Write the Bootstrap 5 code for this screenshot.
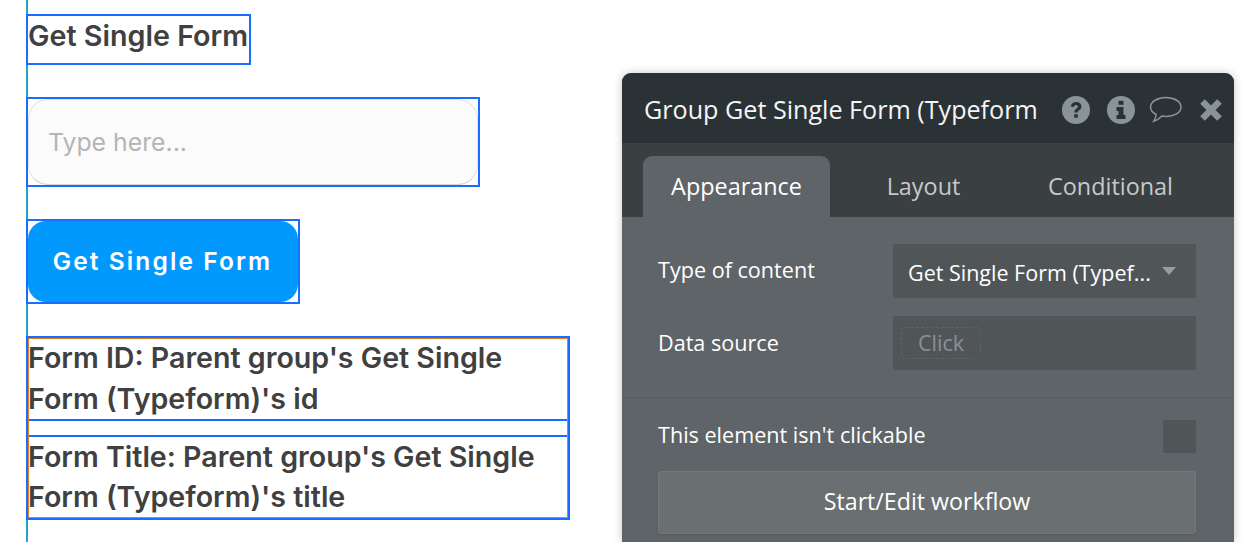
<!DOCTYPE html>
<html lang="en">
<head>
<meta charset="utf-8">
<title>Get Single Form</title>
<link href="https://cdn.jsdelivr.net/npm/bootstrap@5.3.0/dist/css/bootstrap.min.css" rel="stylesheet">
<style>
html,body{height:542px;overflow:hidden;background:#fff}
body{font-family:"Inter",sans-serif;color:#404040;position:relative}
.guide-line{position:absolute;left:26px;top:0;bottom:0;width:2px;background:#1fa5c9}
.canvas-col{padding-left:26px;padding-top:14px}
.sel-box{border:2px solid #1a6dff;position:relative;box-sizing:border-box}
.title-box{width:225px;height:51px;font-size:28.7px;font-weight:600;line-height:39px;white-space:nowrap}
.input-box{width:454px;height:90px;margin-top:32px}
.fake-input{height:100%;border:1px solid #e2e2e2;border-bottom-color:#d6d6d6;border-radius:20px;background:#fbfbfb;color:#b5b5b5;font-size:24.8px;padding-left:19px;line-height:85px}
.btn-box{width:274px;height:85px;margin-top:32px}
.blue-btn{display:block;width:100%;height:100%;background:#0299ff;border:0;border-radius:18px;color:#fff;font-size:24.5px;font-weight:600;letter-spacing:2.1px;padding:0 1px 0 0;font-family:"Inter",sans-serif}
.text-stack{width:544px;margin-top:32px;font-size:28.6px;font-weight:600}
.text-stack::after{content:"";position:absolute;inset:0;border:1px solid #e67e22;pointer-events:none}
.text-row{height:83px;line-height:40.5px;white-space:nowrap}
.text-row.first-row{border-bottom:2px solid #1a6dff}
.text-row.second-row{border-top:2px solid #1a6dff;margin-top:14px;line-height:40px}
.prop-panel{position:absolute;left:622px;top:73px;width:612px;height:469px;background:#5f6468;border-radius:9px 9px 0 0;box-shadow:0 0 10px rgba(0,0,0,.22);font-family:"Open Sans",sans-serif;color:#fff;overflow:hidden}
.panel-head{height:70px;background:#2b3235;padding:3px 1px 0 22px}
.panel-title{font-size:25.15px;white-space:nowrap;color:#f4f5f5}
.icon-slot{width:45px}
.tab-row{height:74px;background:#3a3f42;padding:13px 0 0 21px}
.tab-item{width:187px;height:61px;font-size:23.4px;line-height:60px;text-align:center;color:#c6c9ca;border-radius:9px 9px 0 0}
.tab-item.active-tab{background:#5f6468;color:#fff}
.prop-area{padding:27px 38px 0 36px}
.prop-label{font-size:21.6px;color:#fff;line-height:28px}
.label-nudge{margin-top:-2px}
.fake-select{width:303px;height:54px;background:#505558;border-radius:2px;font-size:21.5px;padding:4px 20px 0 15px;color:#fff}
.caret-shape{width:0;height:0;border-left:7.5px solid transparent;border-right:7.5px solid transparent;border-top:8px solid #999ea1;margin-top:-4px}
.source-row{margin-top:18px}
.fake-source{width:303px;height:54px;background:#505558;border-radius:2px;padding:11px 8px}
.click-chip{width:80px;height:32px;border:1px dashed #5f6467;border-radius:5px;color:#8c9093;font-size:21.5px;line-height:30px;text-align:center}
.prop-rule{border-top:1px solid #575c5f;margin-top:27px}
.check-area{padding:22px 38px 0 36px}
.check-area .label-nudge{margin-top:-3px}
.check-square{width:33px;height:33px;background:#505558;border-radius:2px}
.wf-btn{height:63px;margin-top:18px;background:#6a6f71;border:1px solid #73787a;border-radius:3px;font-size:23.2px;color:#fff;line-height:58px;text-align:center;box-shadow:0 1px 2px rgba(0,0,0,.12)}
</style>
</head>
<body>
<div class="guide-line"></div>
<div class="canvas-col">
  <div class="sel-box title-box">Get Single Form</div>
  <div class="sel-box input-box"><div class="fake-input">Type here...</div></div>
  <div class="sel-box btn-box"><button type="button" class="blue-btn">Get Single Form</button></div>
  <div class="sel-box text-stack">
    <div class="text-row first-row">Form ID: Parent group's Get Single<br>Form (Typeform)'s id</div>
    <div class="text-row second-row">Form Title: Parent group's Get Single<br>Form (Typeform)'s title</div>
  </div>
</div>

<section class="prop-panel">
  <div class="panel-head d-flex align-items-center justify-content-between">
    <div class="panel-title">Group Get Single Form (Typeform</div>
    <div class="d-flex align-items-center">
      <div class="icon-slot d-flex justify-content-center"><svg width="28" height="28" viewBox="0 0 28 28"><circle cx="14" cy="14" r="14" fill="#8a9496"/><path d="M8.800 10.600C9 7.600 11.200 6 14.100 6c3 0 5.300 1.700 5.300 4.400 0 2.100-1.200 3.100-2.500 4-1 .7-1.300 1.100-1.300 2.100h-3.300c0-2 .7-2.900 2-3.800 1-.7 1.600-1.200 1.600-2.100 0-1-.8-1.600-1.900-1.600-1.200 0-2 .8-2.100 1.900z" fill="#2b3235"/><rect x="12.200" y="18.200" width="3.500" height="3.500" fill="#2b3235"/></svg></div>
      <div class="icon-slot d-flex justify-content-center"><svg width="28" height="28" viewBox="0 0 28 28"><circle cx="14" cy="14" r="14" fill="#8a9496"/><rect x="11.500" y="4.800" width="5" height="4" fill="#2b3235"/><path d="M9.500 11h7v8h2v4h-9v-4h2v-4h-2z" fill="#2b3235"/></svg></div>
      <div class="icon-slot d-flex justify-content-center"><svg width="34" height="28" viewBox="0 0 34 28"><path d="M17 1.500C8.700 1.500 1.500 5.600 1.500 11.100c0 3.200 2.400 5.800 5.700 7.400-.4 2.600-1.300 5-2.500 6.800 3.400-1 6.200-3 8.200-5.200 1.300.3 2.700.4 4.100.4 8.300 0 15-3.700 15-9.300S25.300 1.500 17 1.500z" fill="none" stroke="#8a9496" stroke-width="1.500"/></svg></div>
      <div class="icon-slot d-flex justify-content-center"><svg width="24" height="24" viewBox="0 0 24 24"><path d="M3.500 3.500l17 17M20.500 3.500l-17 17" stroke="#8a9496" stroke-width="6.500" fill="none"/></svg></div>
    </div>
  </div>
  <div class="tab-row d-flex">
    <div class="tab-item active-tab">Appearance</div>
    <div class="tab-item">Layout</div>
    <div class="tab-item">Conditional</div>
  </div>
  <div class="prop-area">
    <div class="d-flex align-items-center justify-content-between">
      <div class="prop-label label-nudge">Type of content</div>
      <div class="fake-select d-flex align-items-center justify-content-between">
        <span>Get Single Form (Typef...</span><span class="caret-shape"></span>
      </div>
    </div>
    <div class="source-row d-flex align-items-center justify-content-between">
      <div class="prop-label">Data source</div>
      <div class="fake-source"><div class="click-chip">Click</div></div>
    </div>
  </div>
  <div class="prop-rule"></div>
  <div class="check-area">
    <div class="d-flex align-items-center justify-content-between">
      <div class="prop-label label-nudge">This element isn't clickable</div>
      <div class="check-square"></div>
    </div>
    <div class="wf-btn">Start/Edit workflow</div>
  </div>
</section>
</body>
</html>
